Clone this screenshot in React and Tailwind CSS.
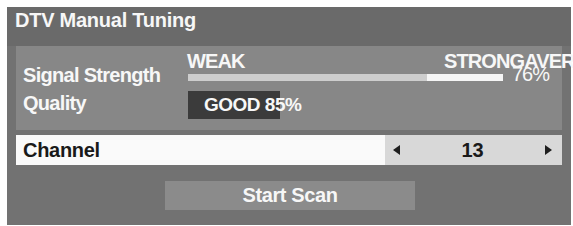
const font = { fontFamily: '"Liberation Sans", Arial, sans-serif' }

const Arrow = ({ dir }) => (
  <svg width="7" height="10" viewBox="0 0 7 10" className="block">
    {dir === 'left' ? (
      <polygon points="7,0 7,10 0,5" fill="#1e1e1e" />
    ) : (
      <polygon points="0,0 0,10 7,5" fill="#1e1e1e" />
    )}
  </svg>
)

const App = () => {
  return (
    <div className="w-[573px] h-[226px] bg-white pl-[7px] pt-[7px] overflow-hidden" style={font}>
      <div className="w-[564px] h-[218px] bg-[#727272] flex flex-col">
        {/* Title */}
        <div className="h-[39px] bg-[#6a6a6a] pl-[8px] pt-[3px] text-[20px] leading-[20px] font-bold text-[#f7f7f7] tracking-[-0.25px]">
          DTV Manual Tuning
        </div>

        {/* Signal / quality panel */}
        <div className="mx-[9px] h-[84px] bg-[#878787] flex">
          <div className="w-[172px] pl-[7px] pt-[15px] text-[20px] leading-[28px] font-bold text-[#f7f7f7] tracking-[-0.7px]">
            <div>Signal Strength</div>
            <div>Quality</div>
          </div>
          <div className="w-[315px] pt-[5px] relative">
            <div className="flex justify-between text-[20px] leading-[20px] font-bold text-[#f7f7f7] tracking-[-0.9px]">
              <span className="-ml-[1px]">WEAK</span>
              <span className="w-[59px] whitespace-nowrap">STRONGAVER</span>
            </div>
            <div className="mt-[3px] h-[7px] flex">
              <div className="w-[239px] bg-[#cdcdcd]" />
              <div className="flex-1 bg-[#f5f5f5]" />
            </div>
            <div className="mt-[10px] w-[92px] h-[28px] bg-[#3b3b3b] pl-[16px] text-[19px] leading-[28px] font-bold text-[#f7f7f7] whitespace-nowrap tracking-[-0.5px]">
              GOOD 85%
            </div>
            <span className="absolute left-[324px] top-[18px] text-[20px] leading-[20px] text-[#f7f7f7] tracking-[-1px]">
              76%
            </span>
          </div>
        </div>

        {/* Channel row */}
        <div className="mx-[9px] mt-[5px] h-[30px] flex">
          <div className="w-[369px] bg-[#fafafa] pl-[7px] text-[20px] leading-[30px] font-bold text-[#1a1a1a] tracking-[-0.3px]">
            Channel
          </div>
          <div className="flex-1 bg-[#d8d8d8] flex items-center justify-between pl-[8px] pr-[10px]">
            <Arrow dir="left" />
            <span className="text-[20px] leading-[30px] font-bold text-[#1a1a1a]">13</span>
            <Arrow dir="right" />
          </div>
        </div>

        {/* Start scan */}
        <div className="mt-[16px] flex">
          <button className="ml-[158px] w-[250px] h-[29px] bg-[#8b8b8b] text-[20px] leading-[29px] font-bold text-[#f7f7f7] tracking-[-0.4px]">
            Start Scan
          </button>
        </div>
      </div>
    </div>
  )
}

export default App
